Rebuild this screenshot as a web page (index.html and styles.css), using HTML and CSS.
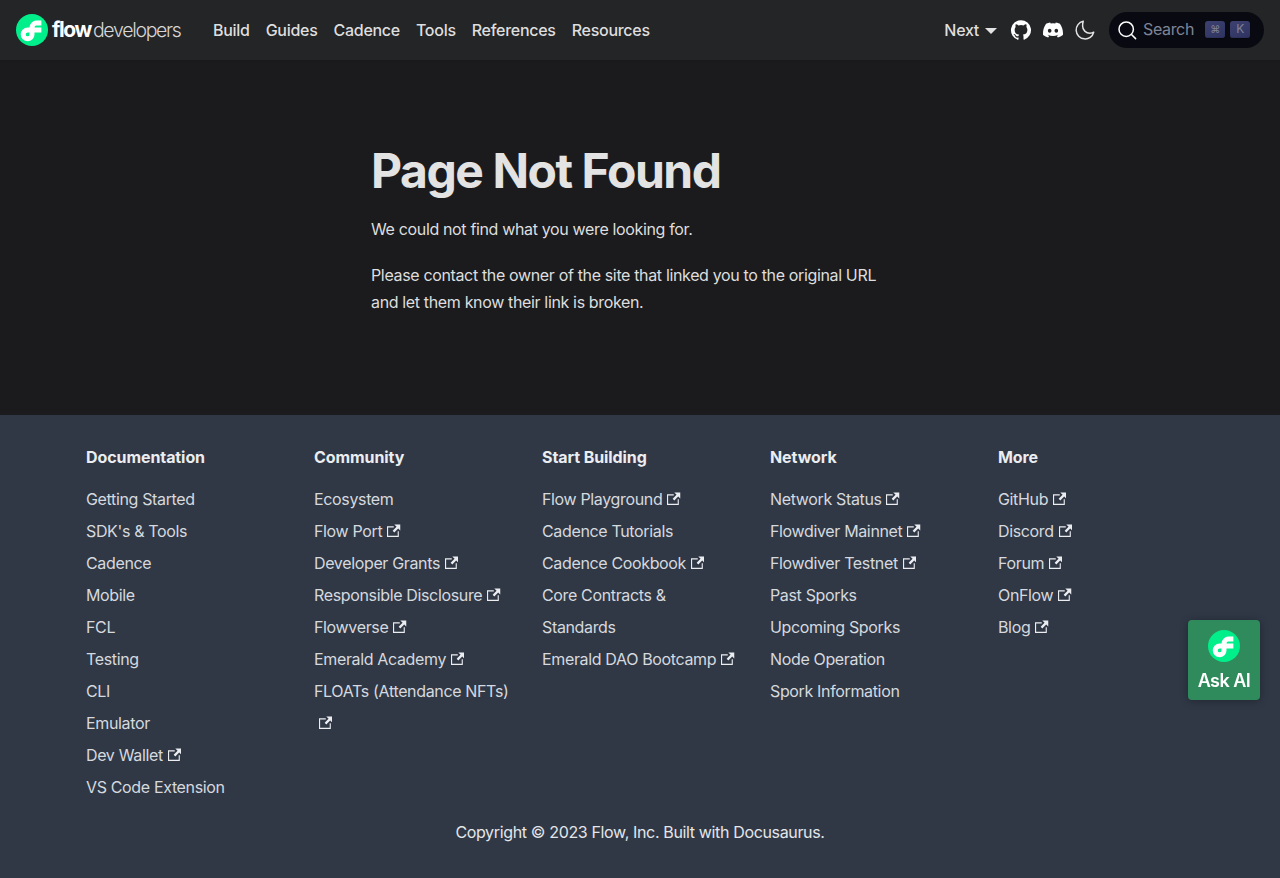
FILE: index.html
```html
<!DOCTYPE html>
<html lang="en">
<head>
<meta charset="utf-8">
<title>Page Not Found | Flow Developers</title>
<link rel="stylesheet" href="styles.css">
</head>
<body>
<svg class="defs" width="0" height="0" aria-hidden="true">
  <symbol id="ext" viewBox="0 0 24 24"><path fill="currentColor" d="M21 13v10h-21v-19h12v2h-10v15h17v-8h2zm3-12h-10.988l4.035 4-6.977 7.07 2.828 2.828 6.977-7.07 4.125 4.172v-11z"/></symbol>
  <symbol id="flow" viewBox="0 0 2500 2500"><circle cx="1250" cy="1250" r="1250" fill="#00ef8b"/><path fill="#fff" fill-rule="evenodd" d="M1592 517H1982V907H1592A147 147 0 0 0 1445 1054V1055H1982V1445H1445V1592A537 537 0 1 1 908 1055H1055V1054A537 537 0 0 1 1592 517ZM1055 1445H908A147 147 0 1 0 1055 1592Z"/></symbol>
</svg>
<nav class="navbar">
  <a class="brand" href="#">
    <svg class="brand-icon"><use href="#flow"/></svg>
    <span class="brand-text"><b>flow</b><span>developers</span></span>
  </a>
  <div class="nav-links">
    <a href="#">Build</a>
    <a href="#">Guides</a>
    <a href="#">Cadence</a>
    <a href="#">Tools</a>
    <a href="#">References</a>
    <a href="#">Resources</a>
  </div>
  <div class="nav-right">
    <a class="version" href="#">Next<i class="caret"></i></a>
    <a class="nav-icon" href="#" aria-label="GitHub">
      <svg width="24" height="24" viewBox="0 0 24 24"><path fill="#fff" d="M12 2.200A10 10 0 0 0 8.840 21.700c.5.090.68-.22.680-.48v-1.700c-2.780.6-3.370-1.340-3.370-1.340-.45-1.160-1.110-1.470-1.110-1.470-.91-.62.070-.61.070-.61 1 .07 1.530 1.030 1.530 1.030.89 1.530 2.340 1.090 2.910.83.090-.65.350-1.090.64-1.340-2.220-.25-4.560-1.110-4.560-4.940 0-1.090.39-1.980 1.030-2.680-.1-.25-.45-1.270.1-2.650 0 0 .84-.27 2.750 1.030a9.500 9.500 0 0 1 5 0c1.910-1.300 2.750-1.030 2.750-1.030.55 1.380.2 2.400.1 2.650.64.7 1.030 1.590 1.030 2.680 0 3.840-2.340 4.690-4.570 4.930.36.310.68.920.68 1.850v2.740c0 .27.180.580.690.480A10 10 0 0 0 12 2.200z"/></svg>
    </a>
    <a class="nav-icon" href="#" aria-label="Discord">
      <svg width="20" height="16" viewBox="0 0 127.140 96.360"><path fill="#fff" d="M107.700 8.070A105.150 105.150 0 0 0 81.470 0a72.060 72.060 0 0 0-3.360 6.830 97.680 97.680 0 0 0-29.110 0A72.370 72.370 0 0 0 45.640 0a105.890 105.890 0 0 0-26.250 8.090C2.790 32.650-1.710 56.600.54 80.210a105.730 105.730 0 0 0 32.170 16.150 77.700 77.700 0 0 0 6.890-11.110 68.420 68.420 0 0 1-10.850-5.180c.91-.66 1.800-1.340 2.660-2a75.570 75.570 0 0 0 64.320 0c.87.710 1.760 1.390 2.660 2a68.680 68.680 0 0 1-10.870 5.190 77 77 0 0 0 6.890 11.100 105.250 105.250 0 0 0 32.190-16.140c2.640-27.380-4.510-51.110-18.900-72.150zM42.450 65.690C36.180 65.690 31 60 31 53s5-12.740 11.430-12.740S54 46 53.890 53s-5.050 12.690-11.440 12.690zm42.240 0C78.410 65.690 73.250 60 73.250 53s5-12.740 11.440-12.740S96.230 46 96.120 53s-5.040 12.690-11.430 12.690z"/></svg>
    </a>
    <a class="nav-icon" href="#" aria-label="Theme">
      <svg width="24" height="24" viewBox="0 0 24 24"><path fill="none" stroke="#e3e3e3" stroke-width="1.500" stroke-linejoin="round" d="M10.200 3.300a8.900 8.900 0 1 0 10.500 10.900 7.400 7.400 0 0 1-3.800 1C12.900 15.200 9.600 12 9.600 8c0-1.700.2-3.300.6-4.700z"/></svg>
    </a>
    <button class="search" type="button">
      <svg width="20" height="20" viewBox="0 0 20 20"><circle cx="9.200" cy="9.200" r="7.200" fill="none" stroke="#fff" stroke-width="1.500"/><path d="M14.500 14.500l4.100 4.100" stroke="#fff" stroke-width="1.500" stroke-linecap="round"/></svg>
      <span class="search-label">Search</span>
      <span class="keys"><kbd class="cmd">⌘</kbd><kbd>K</kbd></span>
    </button>
  </div>
</nav>

<main class="main">
  <div class="content">
    <h1>Page Not Found</h1>
    <p>We could not find what you were looking for.</p>
    <p>Please contact the owner of the site that linked you to the original URL and let them know their link is broken.</p>
  </div>
</main>

<footer class="footer">
  <div class="columns">
    <div class="col">
      <h2>Documentation</h2>
      <ul>
        <li><a href="#">Getting Started</a></li>
        <li><a href="#">SDK's &amp; Tools</a></li>
        <li><a href="#">Cadence</a></li>
        <li><a href="#">Mobile</a></li>
        <li><a href="#">FCL</a></li>
        <li><a href="#">Testing</a></li>
        <li><a href="#">CLI</a></li>
        <li><a href="#">Emulator</a></li>
        <li><a href="#">Dev Wallet<svg class="ext"><use href="#ext"/></svg></a></li>
        <li><a href="#">VS Code Extension</a></li>
      </ul>
    </div>
    <div class="col">
      <h2>Community</h2>
      <ul>
        <li><a href="#">Ecosystem</a></li>
        <li><a href="#">Flow Port<svg class="ext"><use href="#ext"/></svg></a></li>
        <li><a href="#">Developer Grants<svg class="ext"><use href="#ext"/></svg></a></li>
        <li><a href="#">Responsible Disclosure<svg class="ext"><use href="#ext"/></svg></a></li>
        <li><a href="#">Flowverse<svg class="ext"><use href="#ext"/></svg></a></li>
        <li><a href="#">Emerald Academy<svg class="ext"><use href="#ext"/></svg></a></li>
        <li><a href="#">FLOATs (Attendance NFTs)<svg class="ext"><use href="#ext"/></svg></a></li>
      </ul>
    </div>
    <div class="col">
      <h2>Start Building</h2>
      <ul>
        <li><a href="#">Flow Playground<svg class="ext"><use href="#ext"/></svg></a></li>
        <li><a href="#">Cadence Tutorials</a></li>
        <li><a href="#">Cadence Cookbook<svg class="ext"><use href="#ext"/></svg></a></li>
        <li><a href="#">Core Contracts &amp; Standards</a></li>
        <li><a href="#">Emerald DAO Bootcamp<svg class="ext"><use href="#ext"/></svg></a></li>
      </ul>
    </div>
    <div class="col">
      <h2>Network</h2>
      <ul>
        <li><a href="#">Network Status<svg class="ext"><use href="#ext"/></svg></a></li>
        <li><a href="#">Flowdiver Mainnet<svg class="ext"><use href="#ext"/></svg></a></li>
        <li><a href="#">Flowdiver Testnet<svg class="ext"><use href="#ext"/></svg></a></li>
        <li><a href="#">Past Sporks</a></li>
        <li><a href="#">Upcoming Sporks</a></li>
        <li><a href="#">Node Operation</a></li>
        <li><a href="#">Spork Information</a></li>
      </ul>
    </div>
    <div class="col">
      <h2>More</h2>
      <ul>
        <li><a href="#">GitHub<svg class="ext"><use href="#ext"/></svg></a></li>
        <li><a href="#">Discord<svg class="ext"><use href="#ext"/></svg></a></li>
        <li><a href="#">Forum<svg class="ext"><use href="#ext"/></svg></a></li>
        <li><a href="#">OnFlow<svg class="ext"><use href="#ext"/></svg></a></li>
        <li><a href="#">Blog<svg class="ext"><use href="#ext"/></svg></a></li>
      </ul>
    </div>
  </div>
  <div class="copyright">Copyright © 2023 Flow, Inc. Built with Docusaurus.</div>
</footer>

<button class="ask-ai" type="button">
  <svg class="ask-icon"><use href="#flow"/></svg>
  <span>Ask AI</span>
</button>
</body>
</html>
```
FILE: styles.css
```css
* { box-sizing: border-box; }
html, body { margin: 0; padding: 0; }
body {
  min-height: 878px;
  display: flex;
  flex-direction: column;
  background: #1b1b1d;
  color: #e3e3e3;
  font-family: Inter, "Liberation Sans", sans-serif;
  font-size: 16px;
  line-height: 1.65;
  letter-spacing: -.35px;
}
a { color: inherit; text-decoration: none; }
.defs { position: absolute; }

.navbar {
  height: 60px;
  flex: none;
  display: flex;
  align-items: center;
  padding: 0 16px;
  background: #242526;
  box-shadow: 0 1px 2px rgba(0, 0, 0, .1);
}
.brand { display: flex; align-items: center; margin-right: 16px; }
.brand-icon { width: 32px; height: 32px; margin-right: 4px; }
.brand-text { display: flex; align-items: baseline; width: 137px; line-height: 32px; letter-spacing: 0; }
.brand-text b { font-size: 21px; font-weight: 700; color: #fff; letter-spacing: -1.400px; margin-right: 2px; }
.brand-text span { font-size: 19.500px; font-weight: 300; letter-spacing: -1.300px; color: #d6d6d6; }
.nav-links { display: flex; }
.nav-links a { padding: 0 8px; line-height: 26px; font-weight: 500; letter-spacing: -.280px; color: #dedede; white-space: nowrap; }

.nav-right { display: flex; align-items: center; margin-left: auto; }
.version { display: flex; align-items: center; font-weight: 500; letter-spacing: -.280px; color: #dedede; line-height: 26px; margin-right: 12px; }
.caret {
  width: 0; height: 0; margin-left: 6px; margin-top: 2px;
  border-left: 6.400px solid transparent;
  border-right: 6.400px solid transparent;
  border-top: 6.400px solid #e3e3e3;
}
.nav-icon { display: flex; width: 24px; height: 24px; align-items: center; justify-content: center; margin-right: 8px; }
.search {
  width: 155px;
  height: 36px;
  margin-left: 4px;
  padding: 0 14px 0 8px;
  display: flex;
  align-items: center;
  border: 0;
  border-radius: 40px;
  background: #090a11;
  color: #7f8497;
  font: inherit;
  letter-spacing: -.350px;
}
.search-label { margin-left: 6px; padding-bottom: 2px; font-weight: 400; color: #7f8497; }
.keys { display: flex; gap: 5px; margin-left: auto; padding-bottom: 2px; }
kbd {
  width: 20px;
  height: 17px;
  display: flex;
  align-items: center;
  justify-content: center;
  border-radius: 3px;
  background: linear-gradient(-26.5deg, #2f3360, #3d4170);
  box-shadow: inset 0 -1px 0 0 #2c305a, 0 1px 1px rgba(0, 0, 0, .3);
  color: #7f8497;
  font-family: Inter, "Liberation Sans", sans-serif;
  font-size: 12px;
  line-height: 1;
}
kbd.cmd { font-size: 10px; }

.main { flex: none; height: 355px; padding: 81px 0 0 371px; }
.content { width: 530px; }
h1 { margin: 0 0 15px; font-size: 48px; line-height: 60px; font-weight: 700; letter-spacing: -1.450px; color: #e3e3e3; }
.content p { margin: 0 0 20px; line-height: 26.400px; color: #dedede; }

.footer {
  flex: 1;
  padding: 32px 70px 0;
  background: #303846;
  color: #ebedf0;
}
.columns { display: grid; grid-template-columns: repeat(5, 228px); }
.col { padding: 0 16px; min-height: 368px; }
.col h2 { margin: 0 0 16px; font-size: 16px; line-height: 20px; font-weight: 700; letter-spacing: -.080px; color: #ebedf0; }
.col ul { margin: 0; padding: 0; list-style: none; }
.col li { line-height: 32px; color: #d6d9de; }
.ext { width: 13.500px; height: 13.500px; margin-left: 4.800px; color: #ebedf0; }
.copyright { text-align: center; line-height: 26px; color: #e4e6ea; margin-top: 4px; }

.ask-ai {
  position: fixed;
  left: 1188px;
  top: 620px;
  width: 72px;
  height: 80px;
  padding: 10px 0 0;
  display: flex;
  flex-direction: column;
  align-items: center;
  border: 0;
  border-radius: 4px;
  background: #2f8b5b;
  box-shadow: 0 1px 8px rgba(0, 0, 0, .3);
  color: #fff;
  font-family: Inter, "Liberation Sans", sans-serif;
  font-size: 18px;
  font-weight: 600;
  letter-spacing: -.500px;
  line-height: 24px;
}
.ask-icon { width: 32px; height: 32px; margin-bottom: 7px; }
```
